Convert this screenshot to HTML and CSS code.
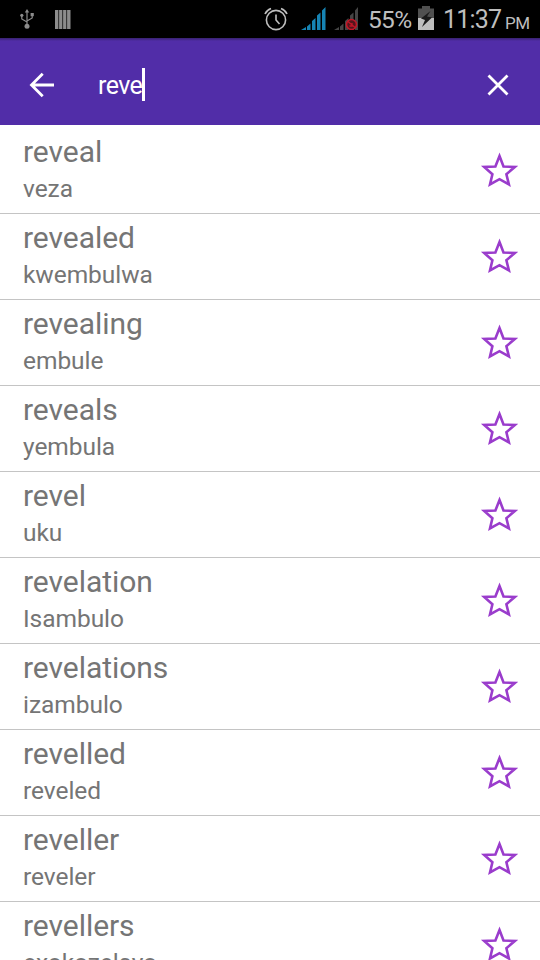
FILE: index.html
```html
<!DOCTYPE html>
<html lang="en">
<head>
    <meta charset="UTF-8">
    <meta name="viewport" content="width=device-width, initial-scale=1.0">
    <title>Dictionary</title>
    <link rel="stylesheet" href="styles.css">
</head>
<body>
    <!-- shared icons -->
    <svg class="defs" width="0" height="0">
        <symbol id="star" viewBox="0 0 38 38">
            <path d="M19.500 5L23.500 15.500L34.800 16L26.400 23.200L28.900 33.500L19.500 28.200L10 33.500L12.400 23.200L4.200 16L15.400 15.500Z" fill="none" stroke="#9a3ccc" stroke-width="2.600"/>
        </symbol>
    </svg>

    <div id="status">
        <svg class="usb" width="14" height="20" viewBox="0 0 14 20" fill="none" stroke="#8c8c8c" stroke-width="1.2">
            <path d="M7 16V3M7 13L1.8 10V6.5M7 12L12.2 9V6"/>
            <path d="M4.8 3.6L7 0L9.2 3.6Z" fill="#8c8c8c" stroke="none"/>
            <circle cx="7" cy="17.3" r="2.5" fill="#8c8c8c" stroke="none"/>
            <circle cx="1.8" cy="6.3" r="1.6" fill="#8c8c8c" stroke="none"/>
            <path d="M10.6 4H13.8V7.2H10.6Z" fill="#8c8c8c" stroke="none"/>
        </svg>
        <svg class="bars" width="16" height="19" viewBox="0 0 16 19" fill="#8c8c8c">
            <path d="M0 0H3.4V19H0ZM4.1 0H7.4V19H4.1ZM8.1 0H11.4V19H8.1ZM12.1 0H15.5V19H12.1Z"/>
        </svg>
        <svg class="alarm" width="24" height="24" viewBox="0 0 24 24" fill="none" stroke="#bebebe" stroke-width="1.6">
            <circle cx="12" cy="13" r="9.6"/>
            <path d="M12 7.5V13L15.5 17M1 7Q2.5 3.2 7 1.4M23 7Q21.5 3.2 17 1.4"/>
        </svg>
        <svg class="signal" width="25" height="24" viewBox="0 0 25 24" fill="#1684b4">
            <path d="M0 24L5 21V24ZM6 20.500L9.500 17.500V24H6ZM11 15L14.500 12V24H11ZM16 9.500L19.500 6.500V24H16ZM21 4.500L24.500 1V24H21Z"/>
        </svg>
        <svg class="signal2" width="25" height="24" viewBox="0 0 25 24">
            <path fill="#454545" d="M0 24L5 21V24ZM6 20.500L9.500 17.500V24H6ZM11 15L14.500 12V24H11ZM16 9.500L19.500 6.500V24H16ZM21 4.500L24 1V24H21Z"/>
            <circle cx="17.500" cy="18.500" r="5" fill="#55151c" stroke="#c01828" stroke-width="1.600"/>
            <path d="M14 15.500L21 21.500M15.500 20H18V17" fill="none" stroke="#c01828" stroke-width="1.300"/>
        </svg>
        <span class="percent">55%</span>
        <svg class="battery" width="16" height="24" viewBox="0 0 16 24">
            <path d="M4 0H12V2.500H16V12L0 14V2.500H4Z" fill="#505050"/>
            <path d="M0 12H16V24H0Z" fill="#bebebe"/>
            <path d="M12.500 5L3 12.500L7 14L4 21L14 11.500L9 10.500Z" fill="#1a1a1a"/>
        </svg>
        <span class="time">11:37</span>
        <span class="pm">PM</span>
    </div>

    <header id="search">
        <svg class="back" width="26" height="26" viewBox="0 0 26 26" fill="none" stroke="#fff" stroke-width="2.800">
            <path d="M25 13H3M13.700 1.800L2.500 13L13.700 24.200"/>
        </svg>
        <span class="query">reve</span><span class="caret"></span>
        <svg class="clear" width="22" height="22" viewBox="0 0 22 22" fill="none" stroke="#fff" stroke-width="2.800">
            <path d="M1.500 1.500L20.500 20.500M20.500 1.500L1.500 20.500"/>
        </svg>
    </header>

    <ul id="words">
        <li><div><h2>reveal</h2><p>veza</p></div><svg class="star"><use href="#star"/></svg></li>
        <li><div><h2>revealed</h2><p>kwembulwa</p></div><svg class="star"><use href="#star"/></svg></li>
        <li><div><h2>revealing</h2><p>embule</p></div><svg class="star"><use href="#star"/></svg></li>
        <li><div><h2>reveals</h2><p>yembula</p></div><svg class="star"><use href="#star"/></svg></li>
        <li><div><h2>revel</h2><p>uku</p></div><svg class="star"><use href="#star"/></svg></li>
        <li><div><h2>revelation</h2><p>Isambulo</p></div><svg class="star"><use href="#star"/></svg></li>
        <li><div><h2>revelations</h2><p>izambulo</p></div><svg class="star"><use href="#star"/></svg></li>
        <li><div><h2>revelled</h2><p>reveled</p></div><svg class="star"><use href="#star"/></svg></li>
        <li><div><h2>reveller</h2><p>reveler</p></div><svg class="star"><use href="#star"/></svg></li>
        <li><div><h2>revellers</h2><p>exokozelayo</p></div><svg class="star"><use href="#star"/></svg></li>
    </ul>
</body>
</html>
```
FILE: styles.css
```css
* {
    box-sizing: border-box;
}

body {
    margin: 0;
    height: 960px;
    overflow: hidden;
    background-color: #fff;
    font-family: Roboto, sans-serif;
    display: flex;
    flex-direction: column;
}

.defs {
    position: absolute;
}

svg {
    flex: none;
    display: block;
}

/* status bar */
#status {
    flex: none;
    height: 38px;
    background-color: #000;
    color: #bebebe;
    display: flex;
    align-items: center;
    padding: 0 9px 0 20px;
    line-height: 38px;
}

.bars {
    margin-left: 21px;
}

.alarm {
    margin-left: 193px;
}

.signal {
    margin-left: 13px;
    margin-top: -2px;
}

.signal2 {
    margin-left: 8px;
    margin-top: -2px;
}

.percent {
    width: 43px;
    margin-left: 9px;
    margin-top: 2px;
    font-size: 24.5px;
    letter-spacing: -0.7px;
    white-space: nowrap;
}

.battery {
    margin-left: 7px;
    margin-top: -2px;
}

.time {
    width: 57px;
    margin-left: 9px;
    margin-top: 2px;
    font-size: 25px;
    letter-spacing: -0.8px;
    white-space: nowrap;
}

.pm {
    margin-left: 5px;
    margin-top: 7px;
    font-size: 17px;
    letter-spacing: -0.4px;
}

/* search bar */
#search {
    flex: none;
    height: 87px;
    background: linear-gradient(#38226f, #512da8 3px);
    color: #fff;
    display: flex;
    align-items: center;
    padding: 6px 31px 0 29px;
}

.query {
    margin-left: 43px;
    margin-top: 2px;
    font-size: 25px;
    letter-spacing: -0.6px;
}

.caret {
    width: 3px;
    height: 33px;
    background-color: #fff;
}

.clear {
    margin-left: auto;
}

/* results */
#words {
    list-style: none;
    margin: 0;
    padding: 3px 0 0;
}

#words li {
    height: 86px;
    border-bottom: 1px solid #c4c4c4;
    display: flex;
    justify-content: space-between;
    padding: 0 22px 0 23px;
}

#words h2,
#words p {
    margin: 0;
    font-weight: normal;
    color: #757575;
    white-space: nowrap;
}

#words h2 {
    margin-top: 5px;
    font-size: 30px;
    line-height: 38px;
    letter-spacing: -0.05px;
}

#words p {
    font-size: 24.5px;
    line-height: 36px;
    letter-spacing: -0.05px;
}

.star {
    width: 38px;
    height: 38px;
    margin-top: 23px;
}
```
